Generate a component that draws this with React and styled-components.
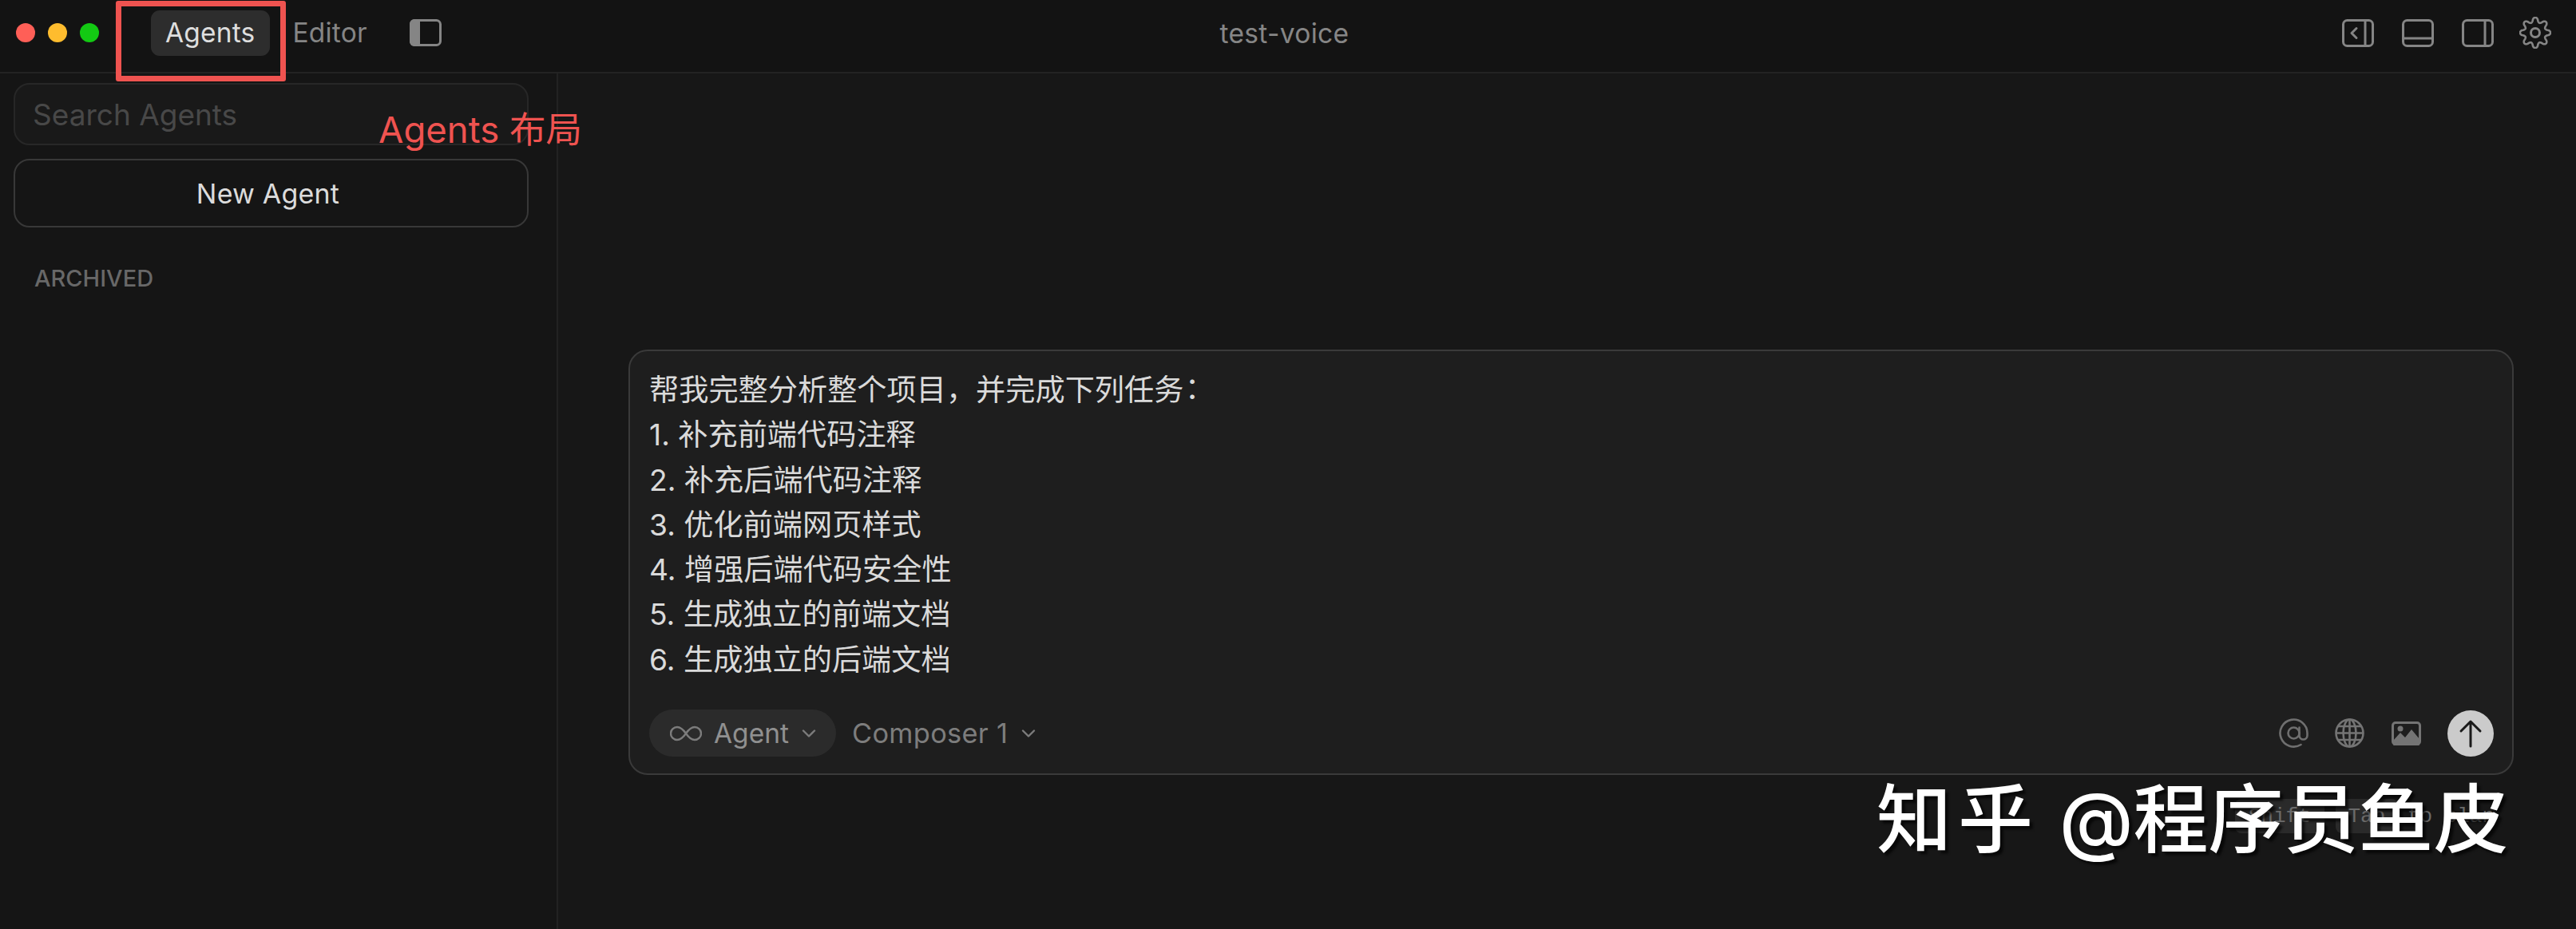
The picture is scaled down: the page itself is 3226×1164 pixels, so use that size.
import React from "react";
import styled, { createGlobalStyle } from "styled-components";

const FONT = `Inter, "Noto Sans CJK SC", sans-serif`;

const Global = createGlobalStyle`
  html, body { margin: 0; padding: 0; background: #171717; }
  body { font-family: ${FONT}; overflow: hidden; }
  * { box-sizing: border-box; }
`;

const Page = styled.div`
  position: relative;
  width: 3226px;
  height: 1164px;
  display: flex;
  flex-direction: column;
  overflow: hidden;
  background: #171717;
`;

const TopBar = styled.header`
  height: 92px;
  flex: none;
  display: grid;
  grid-template-columns: 1fr auto 1fr;
  align-items: center;
  background: #131313;
  border-bottom: 2px solid #232323;
  padding: 0 31px 8px 20px;
`;

const LeftGroup = styled.div`
  display: flex;
  align-items: center;
`;

const Lights = styled.div`
  display: flex;
  gap: 16px;
  margin-right: 65px;
`;

const Light = styled.span`
  width: 24px;
  height: 24px;
  border-radius: 50%;
  background: ${(p) => p.$color};
`;

const Tab = styled.div`
  height: 57px;
  display: flex;
  align-items: center;
  padding: 0 18px;
  border-radius: 11px;
  font-size: 33.5px;
  letter-spacing: 0.2px;
  color: ${(p) => (p.$active ? "#dedede" : "#858585")};
  background: ${(p) => (p.$active ? "#2d2d2d" : "transparent")};
  margin-right: ${(p) => (p.$active ? 11 : 14)}px;
`;

const Title = styled.div`
  font-size: 33.6px;
  color: #868686;
  letter-spacing: 0.3px;
  transform: translateX(1px);
`;

const RightGroup = styled.div`
  display: flex;
  align-items: center;
  justify-content: flex-end;
  gap: 35px;
`;

const Icon = styled.svg`
  display: block;
  flex: none;
  color: ${(p) => p.$color || "#858585"};
  margin-left: ${(p) => p.$ml || 0}px;
`;

const Body = styled.div`
  flex: 1;
  display: flex;
  min-height: 0;
`;

const Sidebar = styled.aside`
  width: 699px;
  flex: none;
  background: #151515;
  border-right: 2px solid #222222;
  padding: 12px 35px 0 17px;
  display: flex;
  flex-direction: column;
`;

const SearchBox = styled.div`
  height: 78px;
  border: 2px solid #272727;
  border-radius: 20px;
  background: #191919;
  display: flex;
  align-items: center;
  padding: 0 22px;
  font-size: 37px;
  color: #484848;
`;

const NewAgent = styled.div`
  height: 86px;
  margin-top: 17px;
  border: 2px solid #383838;
  border-radius: 20px;
  display: flex;
  align-items: center;
  justify-content: center;
  padding-right: 8px;
  font-size: 34px;
  letter-spacing: 0.2px;
  color: #dcdcdc;
`;

const SectionLabel = styled.div`
  margin: 46px 0 0 26px;
  font-size: 29px;
  font-weight: 500;
  color: #686868;
`;

const Main = styled.main`
  flex: 1;
  background: #171717;
  padding: 346px 78px 0 88px;
  display: flex;
  flex-direction: column;
`;

const Composer = styled.section`
  height: 533px;
  border: 2px solid #3a3a3a;
  border-radius: 24px;
  background: #1e1e1e;
  padding: 18px 23px 21px 24px;
  display: flex;
  flex-direction: column;
  justify-content: space-between;
`;

const Prompt = styled.div`
  font-size: 37.2px;
  line-height: 56.3px;
  color: #dadada;
`;

const PromptLine = styled.div`
  white-space: pre;
`;

const Colon = styled.span`
  font-family: "Noto Sans CJK TC", sans-serif;
  margin-left: -8px;
`;

const Toolbar = styled.div`
  display: flex;
  align-items: center;
  justify-content: space-between;
`;

const ToolGroup = styled.div`
  display: flex;
  align-items: center;
`;

const ModeChip = styled.div`
  height: 59px;
  width: 234px;
  border-radius: 30px;
  background: #2b2b2b;
  display: flex;
  align-items: center;
  padding-left: 26px;
  font-size: 33.5px;
  color: #909090;
`;

const ModelChip = styled.div`
  display: flex;
  align-items: center;
  margin-left: 20px;
  font-size: 34.4px;
  letter-spacing: 0.3px;
  color: #7d7d7d;
`;

const Send = styled.div`
  width: 58px;
  height: 58px;
  margin-left: 33px;
  border-radius: 50%;
  background: #cbcbcb;
  display: flex;
  align-items: center;
  justify-content: center;
`;

const HintRow = styled.div`
  margin-top: 30px;
  padding-right: 24px;
  display: flex;
  justify-content: flex-end;
  align-items: center;
  font-family: "Liberation Mono", monospace;
  font-size: 26px;
  color: #6a6a6a;
`;

const Kbd = styled.span`
  height: 43px;
  display: flex;
  align-items: center;
  justify-content: center;
  background: #2a2a2a;
  border-radius: 8px;
  width: ${(p) => p.$w}px;
  margin-right: ${(p) => p.$mr}px;
`;

const AnnotationBox = styled.div`
  position: absolute;
  left: 145px;
  top: 1px;
  width: 213px;
  height: 101px;
  border: 7px solid #ef5350;
  border-radius: 3px;
  pointer-events: none;
`;

const AnnotationText = styled.div`
  position: absolute;
  left: 474px;
  top: 135px;
  font-size: 45.5px;
  line-height: 56px;
  color: #ef5350;
  white-space: pre;
`;

const Watermark = styled.div`
  position: absolute;
  left: 2350px;
  top: 971px;
  font-size: 94px;
  line-height: 112px;
  font-weight: 500;
  color: #ffffff;
  white-space: pre;
  text-shadow: 4px 4px 3px rgba(0, 0, 0, 0.65);
`;

const WatermarkLead = styled.span`
  letter-spacing: 8px;
`;

const gearPath = (() => {
  const pts = [];
  const n = 240;
  for (let i = 0; i < n; i++) {
    const t = (i / n) * Math.PI * 2;
    const c = Math.cos(8 * t);
    const s = Math.sign(c) * Math.pow(Math.abs(c), 0.7);
    const r = 16.2 + 2.9 * s;
    pts.push(`${(20 + r * Math.sin(t)).toFixed(2)} ${(20 - r * Math.cos(t)).toFixed(2)}`);
  }
  return `M${pts.join("L")}Z`;
})();

const PanelLeftIcon = () => (
  <Icon width="40" height="34" viewBox="0 0 40 34" $ml={21}>
    <path d="M6 0h7v34H6a6 6 0 0 1-6-6V6a6 6 0 0 1 6-6z" fill="#858585" />
    <rect x="1.5" y="1.5" width="37" height="31" rx="5" fill="none" stroke="#858585" strokeWidth="3" />
  </Icon>
);

const BackPanelIcon = () => (
  <Icon width="40" height="35" viewBox="0 0 40 35" fill="none" stroke="currentColor" strokeWidth="3">
    <rect x="1.5" y="1.5" width="37" height="32" rx="5" />
    <path d="M29 2v31" />
    <path d="M18 11.5l-6 6 6 6" strokeLinecap="round" strokeLinejoin="round" />
  </Icon>
);

const BottomPanelIcon = () => (
  <Icon width="40" height="35" viewBox="0 0 40 35" fill="none" stroke="currentColor" strokeWidth="3">
    <rect x="1.5" y="1.5" width="37" height="32" rx="5" />
    <path d="M2 24h36" />
  </Icon>
);

const RightPanelIcon = () => (
  <Icon width="40" height="35" viewBox="0 0 40 35" fill="none" stroke="currentColor" strokeWidth="3">
    <rect x="1.5" y="1.5" width="37" height="32" rx="5" />
    <path d="M29 2v31" />
  </Icon>
);

const GearIcon = () => (
  <Icon width="40" height="40" viewBox="0 0 40 40" fill="none" stroke="currentColor" strokeWidth="2.6" $ml={-3}>
    <path d={gearPath} strokeLinejoin="round" />
    <circle cx="20" cy="20" r="5.5" strokeWidth="3" />
  </Icon>
);

const InfinityIcon = () => (
  <Icon width="40" height="20" viewBox="0 0 40 20" fill="none" stroke="#7c7c7c" strokeWidth="2.4" style={{ marginRight: 15 }}>
    <path d="M20 10c-3.5-5-6.5-8-11-8a8 8 0 0 0 0 16c4.5 0 7.5-3 11-8s6.5-8 11-8a8 8 0 0 1 0 16c-4.5 0-7.5-3-11-8z" />
  </Icon>
);

const Chevron = ({ ml, color = "#7c7c7c" }) => (
  <Icon width="18" height="12" viewBox="0 0 18 12" fill="none" stroke={color} strokeWidth="2.4" strokeLinecap="round" strokeLinejoin="round" $ml={ml}>
    <path d="M2 2.5l7 7 7-7" />
  </Icon>
);

const AtIcon = () => (
  <Icon width="37" height="38" viewBox="0 0 37 38" fill="none" stroke="#6f6f6f" strokeWidth="2.6" strokeLinecap="round">
    <circle cx="18.5" cy="18.5" r="7" />
    <path d="M25.5 11.5v10a5 5 0 0 0 10 0v-3a17 17 0 1 0-8 14.5" />
  </Icon>
);

const GlobeIcon = () => (
  <Icon width="37" height="37" viewBox="0 0 37 37" fill="none" stroke="#747474" strokeWidth="2.6" $ml={33}>
    <circle cx="18.5" cy="18.5" r="17" />
    <ellipse cx="18.5" cy="18.5" rx="8" ry="17" />
    <path d="M18.5 1.5v34M1.5 18.5h34M4 10h29M4 27h29" />
  </Icon>
);

const ImageIcon = () => (
  <Icon width="37" height="30" viewBox="0 0 37 30" $ml={34}>
    <rect x="1.5" y="1.5" width="34" height="27" rx="3.5" fill="none" stroke="#747474" strokeWidth="3" />
    <path d="M2 25V24l9-10 6 6 8-10 10 12v6a3 3 0 0 1-3 3H5a3 3 0 0 1-3-3z" fill="#747474" />
    <circle cx="11" cy="9" r="3.5" fill="#747474" />
  </Icon>
);

const ArrowIcon = () => (
  <Icon width="30" height="36" viewBox="0 0 30 36" fill="none" stroke="#1a1a1a" strokeWidth="3" strokeLinecap="round" strokeLinejoin="round">
    <path d="M15 34V3M3 15L15 3l12 12" />
  </Icon>
);

const LINES = [
  "1. 补充前端代码注释",
  "2. 补充后端代码注释",
  "3. 优化前端网页样式",
  "4. 增强后端代码安全性",
  "5. 生成独立的前端文档",
  "6. 生成独立的后端文档",
];

export default function App() {
  return (
    <Page>
      <Global />
      <TopBar>
        <LeftGroup>
          <Lights>
            <Light $color="#ff5f57" />
            <Light $color="#febc2e" />
            <Light $color="#13c913" />
          </Lights>
          <Tab $active>Agents</Tab>
          <Tab>Editor</Tab>
          <PanelLeftIcon />
        </LeftGroup>
        <Title>test-voice</Title>
        <RightGroup>
          <BackPanelIcon />
          <BottomPanelIcon />
          <RightPanelIcon />
          <GearIcon />
        </RightGroup>
      </TopBar>
      <Body>
        <Sidebar>
          <SearchBox>Search Agents</SearchBox>
          <NewAgent>New Agent</NewAgent>
          <SectionLabel>ARCHIVED</SectionLabel>
        </Sidebar>
        <Main>
          <Composer>
            <Prompt>
              <PromptLine>
                帮我完整分析整个项目，并完成下列任务<Colon>：</Colon>
              </PromptLine>
              {LINES.map((l) => (
                <PromptLine key={l}>{l}</PromptLine>
              ))}
            </Prompt>
            <Toolbar>
              <ToolGroup>
                <ModeChip>
                  <InfinityIcon />
                  Agent
                  <Chevron ml={16} />
                </ModeChip>
                <ModelChip>
                  Composer 1
                  <Chevron ml={17} />
                </ModelChip>
              </ToolGroup>
              <ToolGroup>
                <AtIcon />
                <GlobeIcon />
                <ImageIcon />
                <Send>
                  <ArrowIcon />
                </Send>
              </ToolGroup>
            </Toolbar>
          </Composer>
          <HintRow>
            <Kbd $w={112} $mr={14}>Shift</Kbd>
            <Kbd $w={78} $mr={12}>Tab</Kbd>
            to plan
          </HintRow>
        </Main>
      </Body>
      <AnnotationBox />
      <AnnotationText>Agents 布局</AnnotationText>
      <Watermark>
        <WatermarkLead>知乎</WatermarkLead> @程序员鱼皮
      </Watermark>
    </Page>
  );
}
